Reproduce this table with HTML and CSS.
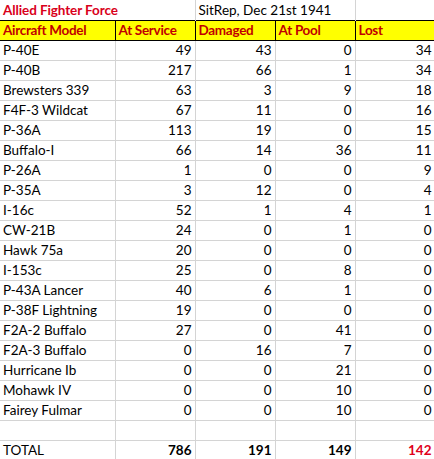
FILE: index.html
```html
<!DOCTYPE html>
<html>
<head>
<meta charset="utf-8">
<link rel="stylesheet" href="styles.css">
</head>
<body>
<table class="sheet">
  <colgroup>
    <col class="c-a"><col class="c-n"><col class="c-n"><col class="c-n"><col class="c-n">
  </colgroup>
  <tr class="title-row">
    <td colspan="2" class="title">Allied Fighter Force</td>
    <td colspan="2" class="sitrep">SitRep, Dec 21st 1941</td>
    <td></td>
  </tr>
  <tr class="head">
    <td>Aircraft Model</td><td>At Service</td><td>Damaged</td><td>At Pool</td><td>Lost</td>
  </tr>
  <tr><td>P-40E</td><td class="n">49</td><td class="n">43</td><td class="n">0</td><td class="n">34</td></tr>
  <tr><td>P-40B</td><td class="n">217</td><td class="n">66</td><td class="n">1</td><td class="n">34</td></tr>
  <tr><td>Brewsters 339</td><td class="n">63</td><td class="n">3</td><td class="n">9</td><td class="n">18</td></tr>
  <tr><td>F4F-3 Wildcat</td><td class="n">67</td><td class="n">11</td><td class="n">0</td><td class="n">16</td></tr>
  <tr><td>P-36A</td><td class="n">113</td><td class="n">19</td><td class="n">0</td><td class="n">15</td></tr>
  <tr><td>Buffalo-I</td><td class="n">66</td><td class="n">14</td><td class="n">36</td><td class="n">11</td></tr>
  <tr><td>P-26A</td><td class="n">1</td><td class="n">0</td><td class="n">0</td><td class="n">9</td></tr>
  <tr><td>P-35A</td><td class="n">3</td><td class="n">12</td><td class="n">0</td><td class="n">4</td></tr>
  <tr><td>I-16c</td><td class="n">52</td><td class="n">1</td><td class="n">4</td><td class="n">1</td></tr>
  <tr><td>CW-21B</td><td class="n">24</td><td class="n">0</td><td class="n">1</td><td class="n">0</td></tr>
  <tr><td>Hawk 75a</td><td class="n">20</td><td class="n">0</td><td class="n">0</td><td class="n">0</td></tr>
  <tr><td>I-153c</td><td class="n">25</td><td class="n">0</td><td class="n">8</td><td class="n">0</td></tr>
  <tr><td>P-43A Lancer</td><td class="n">40</td><td class="n">6</td><td class="n">1</td><td class="n">0</td></tr>
  <tr><td>P-38F Lightning</td><td class="n">19</td><td class="n">0</td><td class="n">0</td><td class="n">0</td></tr>
  <tr><td>F2A-2 Buffalo</td><td class="n">27</td><td class="n">0</td><td class="n">41</td><td class="n">0</td></tr>
  <tr><td>F2A-3 Buffalo</td><td class="n">0</td><td class="n">16</td><td class="n">7</td><td class="n">0</td></tr>
  <tr><td>Hurricane Ib</td><td class="n">0</td><td class="n">0</td><td class="n">21</td><td class="n">0</td></tr>
  <tr><td>Mohawk IV</td><td class="n">0</td><td class="n">0</td><td class="n">10</td><td class="n">0</td></tr>
  <tr><td>Fairey Fulmar</td><td class="n">0</td><td class="n">0</td><td class="n">10</td><td class="n">0</td></tr>
  <tr><td></td><td></td><td></td><td></td><td></td></tr>
  <tr class="total"><td>TOTAL</td><td class="n b">786</td><td class="n b">191</td><td class="n b">149</td><td class="n b red">142</td></tr>
</table>
</body>
</html>
```

FILE: styles.css
```css
html, body {
  margin: 0;
  padding: 0;
  background: #ffffff;
  overflow: hidden;
}
.sheet {
  border-collapse: collapse;
  table-layout: fixed;
  width: 435px;
  font-family: Lato, "Open Sans", sans-serif;
  font-size: 13.5px;
  color: #000000;
}
.c-a { width: 115px; }
.c-n { width: 80px; }
.sheet td {
  height: 20px;
  box-sizing: border-box;
  padding: 0 3px 1px 3px;
  border-right: 1px solid #d4d4d4;
  border-bottom: 1px solid #d4d4d4;
  vertical-align: bottom;
  white-space: nowrap;
  overflow: hidden;
  line-height: 17px;
}
.sheet td.n { text-align: right; }
.title-row td { border-bottom: none; }
.title {
  color: #d9001b;
  font-weight: bold;
  letter-spacing: -0.1px;
}
.head td {
  background: #ffff00;
  color: #c00000;
  font-weight: bold;
  letter-spacing: -0.3px;
  border: 1px solid #000000;
}
.head td:first-child { border-left: none; }
.b { font-weight: bold; }
.red { color: #e0001b; }
```
